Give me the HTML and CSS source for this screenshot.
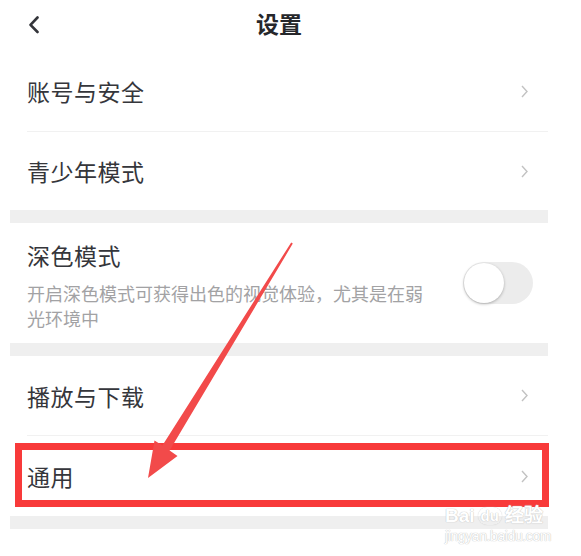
FILE: index.html
```html
<!DOCTYPE html>
<html lang="zh-CN">
    <head>
        <meta charset="UTF-8">
        <title>设置</title>
        <link rel="stylesheet" href="styles.css">
    </head>
    <body>
    <div id="id-div-page">
        <div class="screen">
            <div class="topbar">
                <span class="back">
                    <svg width="12" height="18" viewBox="0 0 12 18"><polyline points="9.5,1.5 2.5,8.8 9.5,16" fill="none" stroke="#34353a" stroke-width="2.6" stroke-linecap="round" stroke-linejoin="round"/></svg>
                </span>
                <div class="title">设置</div>
            </div>
            <ul class="group">
                <li class="item h77 line">
                    <span class="label">账号与安全</span>
                    <svg class="more" width="7" height="13" viewBox="0 0 7 13"><polyline points="1,1 6,6.5 1,12" fill="none" stroke="#c2c2c2" stroke-width="1.4"/></svg>
                </li>
                <li class="item h78">
                    <span class="label">青少年模式</span>
                    <svg class="more" width="7" height="13" viewBox="0 0 7 13"><polyline points="1,1 6,6.5 1,12" fill="none" stroke="#c2c2c2" stroke-width="1.4"/></svg>
                </li>
            </ul>
            <div class="gap"></div>
            <ul class="group">
                <li class="item h120">
                    <div class="text-box">
                        <div class="label">深色模式</div>
                        <div class="desc">开启深色模式可获得出色的视觉体验，尤其是在弱光环境中</div>
                    </div>
                    <span class="switch"><span class="knob"></span></span>
                </li>
            </ul>
            <div class="gap"></div>
            <ul class="group">
                <li class="item h79 line">
                    <span class="label">播放与下载</span>
                    <svg class="more" width="7" height="13" viewBox="0 0 7 13"><polyline points="1,1 6,6.5 1,12" fill="none" stroke="#c2c2c2" stroke-width="1.4"/></svg>
                </li>
                <li class="item h80">
                    <span class="label">通用</span>
                    <svg class="more" width="7" height="13" viewBox="0 0 7 13"><polyline points="1,1 6,6.5 1,12" fill="none" stroke="#c2c2c2" stroke-width="1.4"/></svg>
                </li>
            </ul>
            <div class="gap"></div>
        </div>

        <!-- 标注 -->
        <div class="highlight"></div>
        <svg class="pointer" width="581" height="556" viewBox="0 0 581 556">
            <polygon points="291.2,242.4 292.8,243.6 169.6,450.5 177.5,456 148,478 154.5,440.5 162.4,445.6" fill="#f24a4a"/>
        </svg>
        <div class="mark">
            <div class="mark-top"><span>Bai</span><span class="paw">du</span><span>经验</span></div>
            <div class="mark-url">jingyan.baidu.com</div>
        </div>
    </div>
    </body>
</html>
```

FILE: styles.css
```css
body {
    margin: 0;
    background: #fff;
    font-family: "Noto Sans CJK SC", "Noto Sans", sans-serif;
    color: #35363b;
}
#id-div-page {
    width: 581px;
    height: 556px;
    position: relative;
    overflow: hidden;
}
.screen {
    width: 538px;
    margin-left: 10px;
}
.topbar {
    height: 54px;
    position: relative;
    display: flex;
    justify-content: center;
}
.topbar .back {
    position: absolute;
    left: 18px;
    top: 16px;
    display: flex;
}
.topbar .title {
    margin-top: 8px;
    height: 30px;
    line-height: 30px;
    font-size: 23px;
    font-weight: 700;
    color: #26272b;
}
.group {
    list-style: none;
    margin: 0;
    padding: 0;
}
.item {
    margin-left: 17px;
    padding-right: 20px;
    display: flex;
    justify-content: space-between;
    align-items: center;
    box-sizing: border-box;
}
.h77 { height: 77px; }
.h78 { height: 78px; }
.h79 { height: 79px; }
.h80 { height: 80px; }
.h120 {
    height: 120px;
    padding-right: 15px;
}
.line {
    border-bottom: 1px solid #f1f1f1;
}
.line.h77 {
    height: 78px;
    padding-bottom: 3px;
}
.line.h79 { height: 80px; }
.label {
    font-size: 23px;
    line-height: 30px;
    letter-spacing: 0.5px;
}
.more {
    display: block;
}
.gap {
    height: 13px;
    background-color: #efefef;
}
.text-box {
    width: 405px;
    padding-top: 4px;
}
.desc {
    margin-top: 11px;
    font-size: 18px;
    line-height: 25px;
    color: #a2a2a4;
}
.switch {
    width: 70px;
    height: 42px;
    border-radius: 21px;
    background-color: #ececec;
    position: relative;
}
.switch .knob {
    position: absolute;
    left: 1px;
    top: 1px;
    width: 40px;
    height: 40px;
    border-radius: 50%;
    background: #fff;
    box-shadow: 0 1px 3px rgba(0,0,0,0.28);
}

/* 红框和箭头 */
.highlight {
    position: absolute;
    left: 15px;
    top: 443px;
    width: 534px;
    height: 64px;
    border: 7px solid #f83a3a;
    box-sizing: border-box;
}
.pointer {
    position: absolute;
    left: 0;
    top: 0;
}
.mark {
    position: absolute;
    left: 445px;
    top: 504px;
    width: 104px;
    color: #fff;
    text-shadow: 0 0 1px #c4c4c4, 0 0 1px #c4c4c4;
    font-family: "Liberation Sans", sans-serif;
}
.mark-top {
    display: flex;
    align-items: center;
    font-size: 19px;
    font-weight: 700;
    line-height: 24px;
}
.mark-top .paw {
    margin: 0 3px;
    padding: 0 3px;
    border-radius: 9px;
    font-size: 15px;
    line-height: 18px;
    box-shadow: 0 0 1px #c4c4c4;
}
.mark-url {
    font-size: 14px;
    line-height: 17px;
    letter-spacing: -0.4px;
}
```
